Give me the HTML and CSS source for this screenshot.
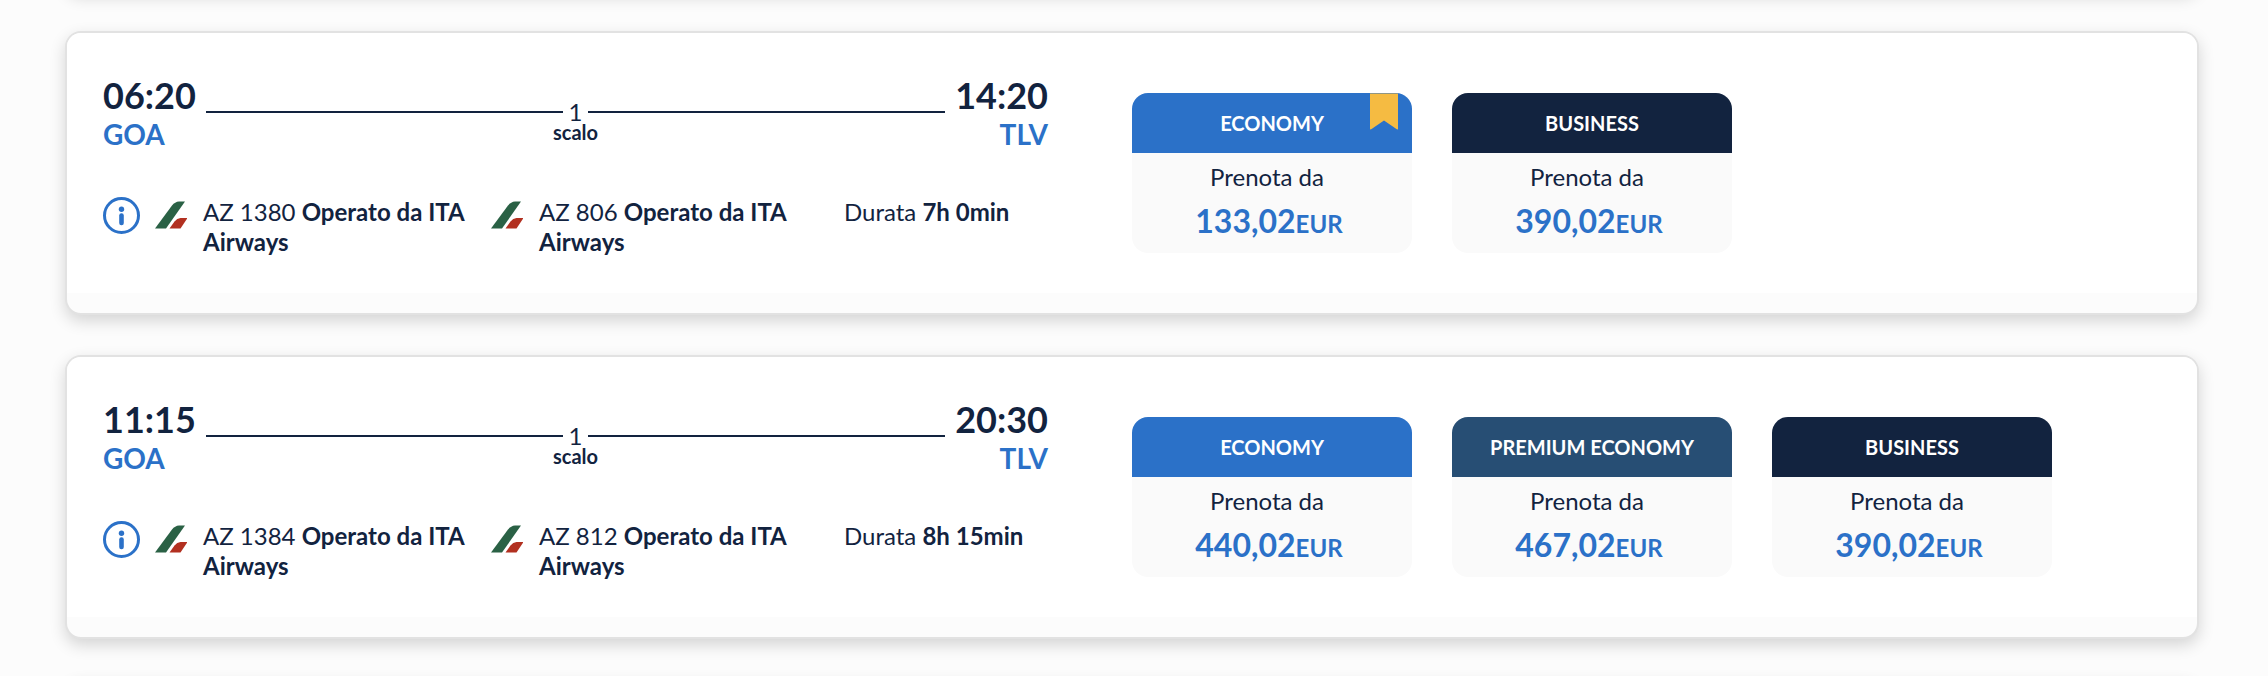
FILE: index.html
```html
<!DOCTYPE html>
<html lang="it">
<head>
<meta charset="utf-8">
<title>Scelta voli</title>
<meta name="viewport" content="width=device-width, initial-scale=1">
<link rel="stylesheet" href="styles.css">
</head>
<body>
<svg class="sprite" aria-hidden="true">
  <symbol id="info" viewBox="0 0 38 38">
    <circle cx="18.500" cy="18.500" r="17" fill="none" stroke="currentColor" stroke-width="3"/>
    <circle cx="18.500" cy="12.300" r="2.700" fill="currentColor"/>
    <rect x="16.200" y="16.300" width="4.600" height="12" rx="2.200" fill="currentColor"/>
  </symbol>
  <symbol id="tail" viewBox="0 0 32 28">
    <path d="M0 27.500 L17 4.500 Q20 .8 24 .5 H30 L11 27.500 Z" fill="#2a6145"/>
    <path d="M14.500 27.500 L19.500 20.500 Q22 17.300 25.500 17 H32.500 L25.500 27.500 Z" fill="#b23020"/>
  </symbol>
  <symbol id="bookmark" viewBox="0 0 28 36">
    <path d="M0 0 H28 V35 Q28 36.500 26.800 35.700 L14 27 L1.200 35.700 Q0 36.500 0 35 Z" fill="#f5bb42"/>
  </symbol>
</svg>
<main class="results">
  <div class="card card--stub"></div>

  <article class="card">
    <div class="card__main">
      <section class="flight">
        <div class="route">
          <div class="stop"><div class="stop__time">06:20</div><div class="stop__code">GOA</div></div>
          <div class="path"><div class="path__line"><span>1</span></div><div class="path__label">scalo</div></div>
          <div class="stop stop--end"><div class="stop__time">14:20</div><div class="stop__code">TLV</div></div>
        </div>
        <div class="details">
          <button class="info" type="button" aria-label="Dettagli volo"><svg><use href="#info"/></svg></button>
          <div class="leg"><svg class="leg__logo"><use href="#tail"/></svg><p>AZ 1380 <b>Operato da ITA Airways</b></p></div>
          <div class="leg"><svg class="leg__logo"><use href="#tail"/></svg><p>AZ 806 <b>Operato da ITA Airways</b></p></div>
          <p>Durata <b>7h 0min</b></p>
        </div>
      </section>
      <section class="fares">
        <button class="fare" type="button">
          <span class="fare__name">ECONOMY</span>
          <svg class="fare__flag"><use href="#bookmark"/></svg>
          <span class="fare__body"><span class="fare__from">Prenota da</span><span class="fare__price">133,02<small>EUR</small></span></span>
        </button>
        <button class="fare fare--business" type="button">
          <span class="fare__name">BUSINESS</span>
          <span class="fare__body"><span class="fare__from">Prenota da</span><span class="fare__price">390,02<small>EUR</small></span></span>
        </button>
      </section>
    </div>
  </article>

  <article class="card">
    <div class="card__main">
      <section class="flight">
        <div class="route">
          <div class="stop"><div class="stop__time">11:15</div><div class="stop__code">GOA</div></div>
          <div class="path"><div class="path__line"><span>1</span></div><div class="path__label">scalo</div></div>
          <div class="stop stop--end"><div class="stop__time">20:30</div><div class="stop__code">TLV</div></div>
        </div>
        <div class="details">
          <button class="info" type="button" aria-label="Dettagli volo"><svg><use href="#info"/></svg></button>
          <div class="leg"><svg class="leg__logo"><use href="#tail"/></svg><p>AZ 1384 <b>Operato da ITA Airways</b></p></div>
          <div class="leg"><svg class="leg__logo"><use href="#tail"/></svg><p>AZ 812 <b>Operato da ITA Airways</b></p></div>
          <p>Durata <b>8h 15min</b></p>
        </div>
      </section>
      <section class="fares">
        <button class="fare" type="button">
          <span class="fare__name">ECONOMY</span>
          <span class="fare__body"><span class="fare__from">Prenota da</span><span class="fare__price">440,02<small>EUR</small></span></span>
        </button>
        <button class="fare fare--premium" type="button">
          <span class="fare__name">PREMIUM ECONOMY</span>
          <span class="fare__body"><span class="fare__from">Prenota da</span><span class="fare__price">467,02<small>EUR</small></span></span>
        </button>
        <button class="fare fare--business" type="button">
          <span class="fare__name">BUSINESS</span>
          <span class="fare__body"><span class="fare__from">Prenota da</span><span class="fare__price">390,02<small>EUR</small></span></span>
        </button>
      </section>
    </div>
  </article>

  <div class="card card--stub"></div>
</main>
</body>
</html>
```
FILE: styles.css
```css
:root {
  --navy: #12233f;
  --blue: #2b71c8;
  --page: #fcfcfc;
}

* { box-sizing: border-box; }

body {
  margin: 0;
  background: var(--page);
  color: var(--navy);
  font: 24px/30px Lato, "Open Sans", sans-serif;
}

p { margin: 0; }

button {
  padding: 0;
  border: 0;
  background: none;
  color: inherit;
  font: inherit;
  cursor: pointer;
}

svg { display: block; }

.sprite {
  position: absolute;
  width: 0;
  height: 0;
}

.results {
  display: flex;
  flex-direction: column;
  gap: 40px;
  height: 100vh;
  overflow: hidden;
  padding: 0 69px 0 65px;
}

.card {
  flex: none;
  padding-bottom: 20px;
  border: 2px solid #e2e2e2;
  border-radius: 16px;
  background: var(--page);
  box-shadow: 0 6px 16px rgba(0, 0, 0, 0.16);
}

/* Neighbouring results that scroll past the edges of the list */
.card--stub { height: 60px; }
.card--stub:first-child { margin-top: -69px; }

.card__main {
  display: grid;
  grid-template-columns: 945fr 1029fr;
  gap: 84px;
  padding: 40px 36px 36px;
  border-radius: 14px 14px 0 0;
  background: #fff;
}

.flight { padding-top: 1px; }

.route {
  display: grid;
  grid-template-columns: auto 1fr auto;
  gap: 10px;
}

.stop__time {
  font-size: 36px;
  font-weight: 700;
  line-height: 42px;
}

.stop__code {
  color: var(--blue);
  font-size: 28px;
  font-weight: 700;
  line-height: 36px;
}

.stop--end { text-align: right; }

.path {
  padding-top: 28px;
  line-height: 20px;
  text-align: center;
}

.path__line {
  display: flex;
  align-items: center;
  gap: 6px;
}

.path__line::before,
.path__line::after {
  content: "";
  flex: 1;
  height: 2px;
  background: var(--navy);
}

.path__label {
  font-size: 20px;
  font-weight: 700;
}

.details {
  display: grid;
  grid-template-columns: 52px 336fr 353fr 204fr;
  margin-top: 45px;
}

.info {
  justify-self: start;
  height: 38px;
  color: var(--blue);
}

.info svg {
  width: 38px;
  height: 38px;
}

.leg {
  display: flex;
  gap: 16px;
}

.leg__logo {
  flex: none;
  width: 32px;
  height: 28px;
  margin-top: 4px;
  overflow: visible;
}

.fares {
  display: flex;
  align-items: flex-start;
  gap: 40px;
  padding-top: 20px;
}

.fare {
  position: relative;
  width: 280px;
  overflow: hidden;
  border-radius: 16px;
  background: #fafafa;
}

.fare__name {
  display: block;
  background: var(--blue);
  color: #fff;
  font-size: 20px;
  font-weight: 700;
  line-height: 60px;
}

.fare--premium .fare__name { background: #274e74; }
.fare--business .fare__name { background: var(--navy); }

.fare__flag {
  position: absolute;
  top: 0;
  right: 14px;
  width: 28px;
  height: 37px;
}

.fare__body {
  display: flex;
  flex-direction: column;
  gap: 9px;
  padding: 9px 0 12px;
}

.fare__from { padding-right: 10px; }

.fare__price {
  padding-right: 6px;
  color: var(--blue);
  font-size: 32px;
  font-weight: 700;
  line-height: 40px;
}

.fare__price small {
  font-size: 24px;
  line-height: 24px;
}
```
